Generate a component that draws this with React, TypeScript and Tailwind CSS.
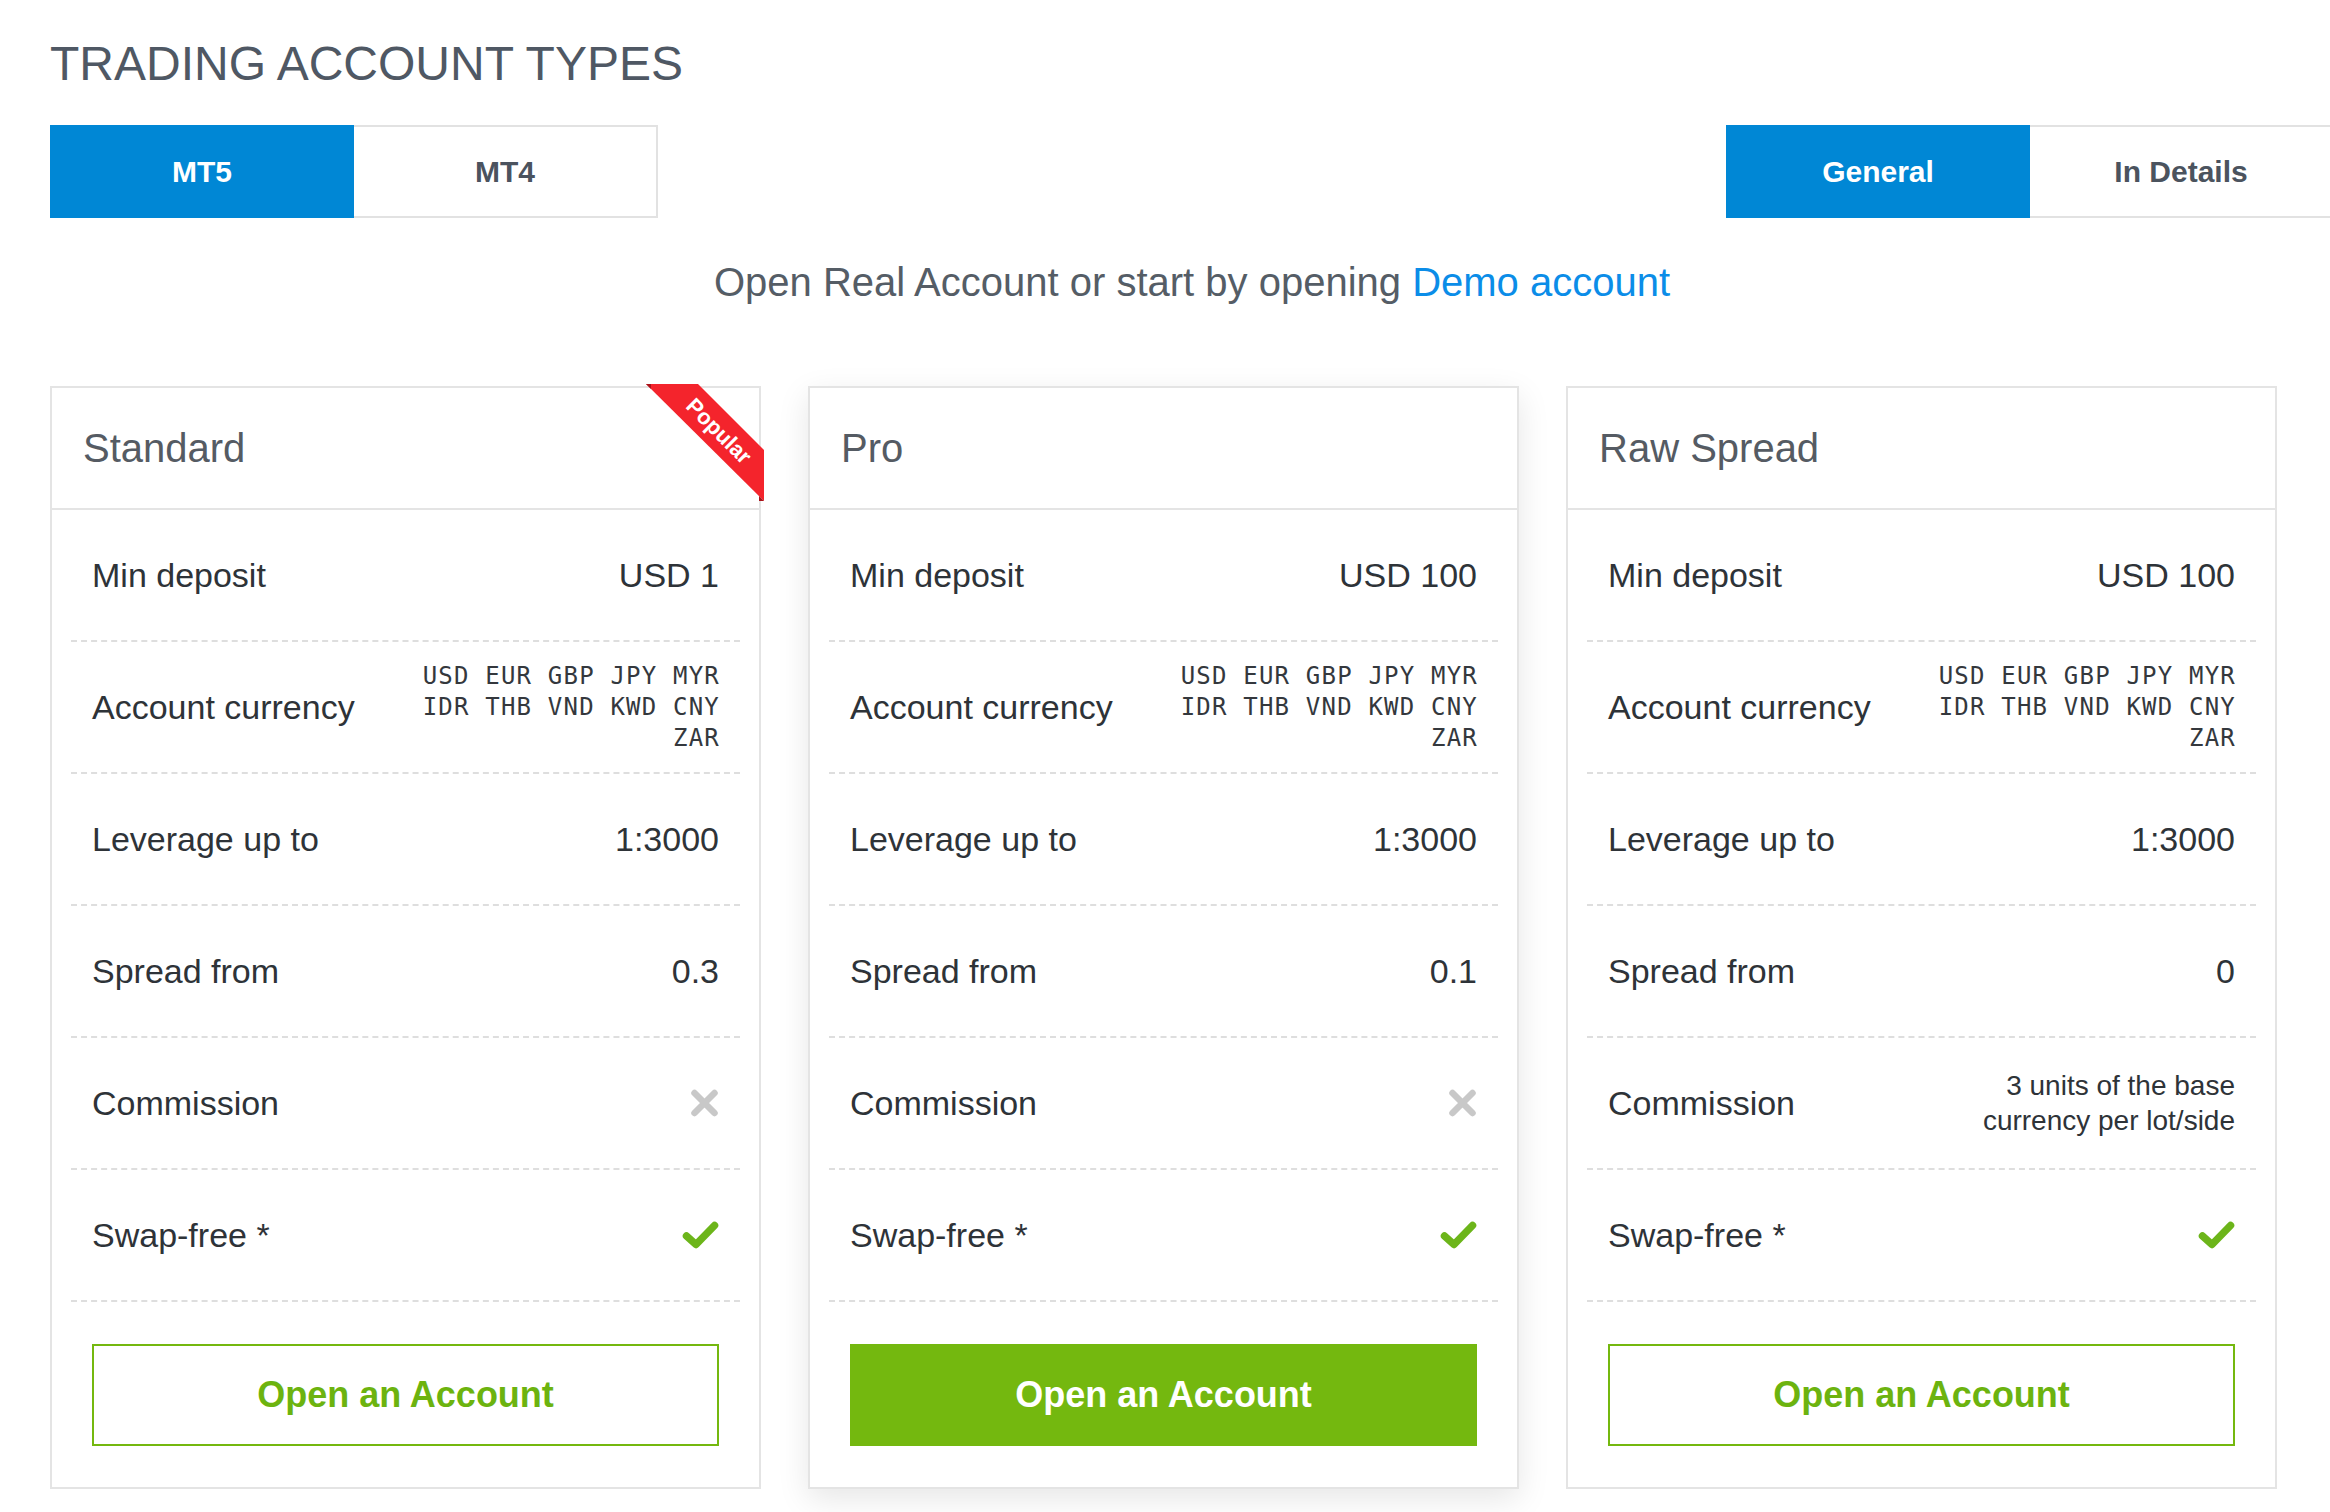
import React from "react";

type Card = {
  name: string;
  popular?: boolean;
  deposit: string;
  spread: string;
  commission: React.ReactNode | null;
  solid?: boolean;
};

const cards: Card[] = [
  { name: "Standard", popular: true, deposit: "USD 1", spread: "0.3", commission: null },
  { name: "Pro", deposit: "USD 100", spread: "0.1", commission: null, solid: true },
  {
    name: "Raw Spread",
    deposit: "USD 100",
    spread: "0",
    commission: (
      <div className="text-right text-[28px] leading-[35px]">
        3 units of the base
        <br />
        currency per lot/side
      </div>
    ),
  },
];

function CrossIcon() {
  return (
    <svg width="29" height="28" viewBox="0 0 29 28" className="block">
      <path d="M4.5 4 L24.5 24 M24.5 4 L4.5 24" stroke="#c8c8c8" strokeWidth="6.5" strokeLinecap="round" fill="none" />
    </svg>
  );
}

function CheckIcon() {
  return (
    <svg width="37" height="28" viewBox="0 0 37 28" className="block">
      <path d="M4.5 15 L14 23.5 L32.5 4.5" stroke="#6cb51a" strokeWidth="7.5" strokeLinecap="round" strokeLinejoin="round" fill="none" />
    </svg>
  );
}

function Ribbon() {
  return (
    <svg width="118" height="117" viewBox="0 0 118 117" className="absolute top-[-4px] right-[-5px] block">
      <polygon points="0,0 52,0 118,66 118,117" fill="#f4242c" />
      <polygon points="0,0 5,0 5,5" fill="#a8131a" />
      <polygon points="113,112 118,117 113,117" fill="#a8131a" />
      <text
        x="73"
        y="47"
        transform="rotate(45 73 47)"
        textAnchor="middle"
        dominantBaseline="central"
        fill="#ffffff"
        fontWeight="700"
        fontSize="22"
        fontFamily="'Liberation Sans', Arial, sans-serif"
      >
        Popular
      </text>
    </svg>
  );
}

function Row({ label, children }: { label: string; children: React.ReactNode }) {
  return (
    <div className="h-[132px] border-b-2 border-dashed border-[#dedede] flex items-center justify-between px-[21px]">
      <div>{label}</div>
      <div className="flex items-center">{children}</div>
    </div>
  );
}

function AccountCard({ card }: { card: Card }) {
  return (
    <div
      className={
        card.solid
          ? "relative w-[711px] bg-white border-2 border-[#e4e4e4] flex flex-col shadow-[0_10px_30px_rgba(0,0,0,0.10)]"
          : "relative w-[711px] bg-white border-2 border-[#e4e4e4] flex flex-col"
      }
    >
      <div className="h-[122px] border-b-2 border-[#e4e4e4] flex items-center pl-[31px] text-[40px] text-[#555b63]">
        {card.name}
      </div>
      <div className="px-[19px] text-[34px] text-[#2e3338]">
        <Row label="Min deposit">{card.deposit}</Row>
        <Row label="Account currency">
          <div className="font-['DejaVu_Sans_Mono',Menlo,monospace] text-[24px] leading-[31px] tracking-[1.2px] mr-[-1px] text-right text-[#34383d] whitespace-pre">
            <div>USD EUR GBP JPY MYR</div>
            <div>IDR THB VND KWD CNY</div>
            <div>ZAR</div>
          </div>
        </Row>
        <Row label="Leverage up to">1:3000</Row>
        <Row label="Spread from">{card.spread}</Row>
        <Row label="Commission">{card.commission ?? <CrossIcon />}</Row>
        <Row label="Swap-free *">
          <CheckIcon />
        </Row>
      </div>
      <div className="px-[40px] pt-[42px] pb-[41px]">
        <button
          className={
            card.solid
              ? "w-full h-[102px] bg-[#74b80f] border-2 border-[#74b80f] text-white text-[36px] font-bold"
              : "w-full h-[102px] bg-white border-2 border-[#74b80f] text-[#6cb30f] text-[36px] font-bold"
          }
        >
          Open an Account
        </button>
      </div>
      {card.popular && <Ribbon />}
    </div>
  );
}

export default function App() {
  return (
    <div className="w-[2330px] min-h-screen overflow-hidden bg-white font-['Liberation_Sans',Arial,sans-serif]">
      <div className="w-[2284px] ml-[50px] pt-[36px]">
        <h1 className="text-[48px] leading-[55px] text-[#4f5864] font-normal">TRADING ACCOUNT TYPES</h1>
        <div className="mt-[34px] flex justify-between">
          <div className="flex">
            <div className="w-[304px] h-[93px] bg-[#0087d5] text-white text-[30px] font-bold flex items-center justify-center">
              MT5
            </div>
            <div className="w-[304px] h-[93px] bg-white border-2 border-l-0 border-[#e2e2e2] text-[#4b535e] text-[30px] font-bold flex items-center justify-center">
              MT4
            </div>
          </div>
          <div className="flex">
            <div className="w-[304px] h-[93px] bg-[#0087d5] text-white text-[30px] font-bold flex items-center justify-center">
              General
            </div>
            <div className="w-[304px] h-[93px] bg-white border-2 border-l-0 border-[#e2e2e2] text-[#4b535e] text-[30px] font-bold flex items-center justify-center">
              In Details
            </div>
          </div>
        </div>
        <p className="mt-[41px] text-center text-[40px] leading-[46px] text-[#555d66]">
          Open Real Account or start by opening <span className="text-[#0b8de8]">Demo account</span>
        </p>
        <div className="mt-[81px] flex gap-[47px]">
          {cards.map((c) => (
            <AccountCard key={c.name} card={c} />
          ))}
        </div>
      </div>
    </div>
  );
}
